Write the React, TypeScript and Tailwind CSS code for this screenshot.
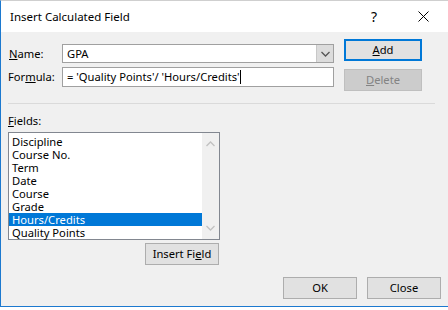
import React from 'react';

const fields = ['Discipline', 'Course No.', 'Term', 'Date', 'Course', 'Grade', 'Hours/Credits', 'Quality Points'];

function Btn({ children, className = '' }: { children: React.ReactNode; className?: string }) {
    return (
        <div className={`flex items-center justify-center h-[22px] w-[74px] bg-[#e1e1e1] border border-[#adadad] text-black ${className}`}>
            {children}
        </div>
    );
}

function Chevron({ up, color }: { up?: boolean; color: string }) {
    return (
        <svg width="9" height="6" viewBox="0 0 9 6">
            <path d={up ? 'M0.5 5 L4.5 1 L8.5 5' : 'M0.5 1 L4.5 5 L8.5 1'} fill="none" stroke={color} strokeWidth="1.3" />
        </svg>
    );
}

export default function App() {
    return (
        <div className="w-[448px] h-[310px] bg-white overflow-hidden font-['Segoe_UI','Noto_Sans',sans-serif] text-[11.2px] leading-[16px] text-black">
            <div className="h-[307px] flex flex-col border-l border-b border-[#1c79cf] border-t border-t-[#cfcfcf]">
                {/* title bar */}
                <div className="h-[31px] bg-white flex items-center shrink-0">
                    <div className="pl-[9px] flex-1 text-[11.5px]">Insert Calculated Field</div>
                    <div className="w-[14px] text-center text-[14px] mr-[37px]">?</div>
                    <svg width="11" height="11" viewBox="0 0 11 11" className="mr-[19px]">
                        <path d="M0.5 0.5 L10.5 10.5 M10.5 0.5 L0.5 10.5" stroke="#000" strokeWidth="1" />
                    </svg>
                </div>

                {/* body */}
                <div className="flex-1 bg-[#f0f0f0] flex flex-col px-[7px]">
                    <div className="flex pt-[7px]">
                        <div className="w-[326px] mt-[5px] flex flex-col gap-[4px]">
                            <div className="flex items-center h-[19px]">
                                <span className="w-[54px] pl-px"><u>N</u>ame:</span>
                                <div className="flex-1 h-[19px] bg-white border border-[#a0a0a0] flex items-center">
                                    <span className="flex-1 pl-[4px]">GPA</span>
                                    <div className="w-[17px] h-full bg-[#dcdcdc] border-l border-[#c8c8c8] flex items-center justify-center">
                                        <Chevron color="#555" />
                                    </div>
                                </div>
                            </div>
                            <div className="flex items-center h-[20px]">
                                <span className="w-[54px]">For<u>m</u>ula:</span>
                                <div className="flex-1 h-[20px] bg-white border border-[#a0a0a0] flex items-center pl-[4px]">
                                    <span className="whitespace-pre">= 'Quality Points'/ 'Hours/Credits'</span>
                                    <span className="w-px h-[14px] bg-black" />
                                </div>
                            </div>
                        </div>
                        <div className="ml-[10px] flex flex-col gap-[8px]">
                            <div className="flex items-center justify-center h-[22px] w-[78px] bg-[#e1e1e1] border-2 border-[#0078d7]">
                                <span><u>A</u>dd</span>
                            </div>
                            <div className="flex items-center justify-center h-[22px] w-[78px] bg-[#cccccc] border border-[#bfbfbf] text-[#838383]">
                                <span><u>D</u>elete</span>
                            </div>
                        </div>
                    </div>

                    <div className="h-px bg-[#dadada] mt-[12px] mr-[6px]" />

                    <div className="mt-[9px]"><u>F</u>ields:</div>
                    <div className="mt-[3px] w-[212px] h-[108px] bg-white border border-[#828790] flex">
                        <div className="flex-1 pt-[2px] leading-[13px]">
                            {fields.map(f => (
                                <div key={f} className={`h-[13px] pl-[3px] ${f === 'Hours/Credits' ? 'bg-[#0078d7] text-white' : ''}`}>{f}</div>
                            ))}
                        </div>
                        <div className="w-[17px] bg-[#f0f0f0] flex flex-col items-center justify-between py-[8px]">
                            <Chevron up color="#c2c2c2" />
                            <Chevron color="#c2c2c2" />
                        </div>
                    </div>
                    <div className="w-[212px] flex justify-end mt-[3px]">
                        <Btn className="mr-px">Insert Fi<u>e</u>ld</Btn>
                    </div>

                    <div className="flex justify-end gap-[10px] mt-[12px]">
                        <Btn>OK</Btn>
                        <Btn>Close</Btn>
                    </div>
                </div>
            </div>
        </div>
    );
}
